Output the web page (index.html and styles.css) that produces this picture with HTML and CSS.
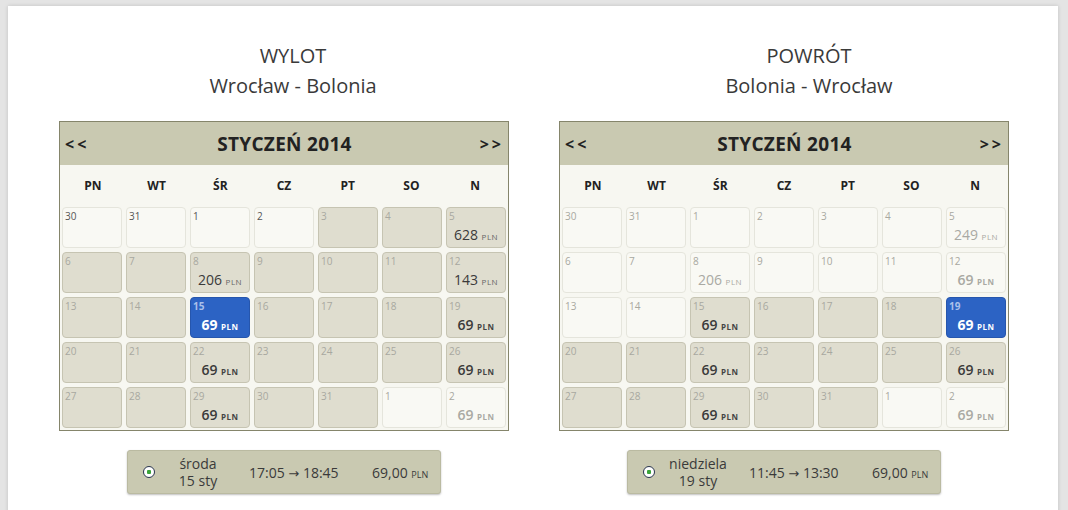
FILE: index.html
```html
<!DOCTYPE html>
<html lang="pl">
<head>
    <meta charset="UTF-8">
    <title>Wybór lotu</title>
    <link rel="stylesheet" href="styles.css">
</head>
<body>
    <div class="page">
        <div class="legs">
            <div class="leg">
                <h2 class="leg-title leg-title-out">WYLOT<br>Wrocław - Bolonia</h2>
                <div class="calendar">
                    <div class="cal-head">
                        <span class="nav">&lt;&lt;</span>
                        <span class="month">STYCZEŃ 2014</span>
                        <span class="nav">&gt;&gt;</span>
                    </div>
                    <div class="weekdays">
                        <span>PN</span><span>WT</span><span>ŚR</span><span>CZ</span><span>PT</span><span>SO</span><span>N</span>
                    </div>
                    <div class="days">
                        <div class="day off dark"><span class="num">30</span></div>
                        <div class="day off dark"><span class="num">31</span></div>
                        <div class="day off dark"><span class="num">1</span></div>
                        <div class="day off dark"><span class="num">2</span></div>
                        <div class="day"><span class="num">3</span></div>
                        <div class="day"><span class="num">4</span></div>
                        <div class="day"><span class="num">5</span><span class="price">628 <small>PLN</small></span></div>

                        <div class="day"><span class="num">6</span></div>
                        <div class="day"><span class="num">7</span></div>
                        <div class="day"><span class="num">8</span><span class="price">206 <small>PLN</small></span></div>
                        <div class="day"><span class="num">9</span></div>
                        <div class="day"><span class="num">10</span></div>
                        <div class="day"><span class="num">11</span></div>
                        <div class="day"><span class="num">12</span><span class="price">143 <small>PLN</small></span></div>

                        <div class="day"><span class="num">13</span></div>
                        <div class="day"><span class="num">14</span></div>
                        <div class="day selected"><span class="num">15</span><span class="price best">69 <small>PLN</small></span></div>
                        <div class="day"><span class="num">16</span></div>
                        <div class="day"><span class="num">17</span></div>
                        <div class="day"><span class="num">18</span></div>
                        <div class="day"><span class="num">19</span><span class="price best">69 <small>PLN</small></span></div>

                        <div class="day"><span class="num">20</span></div>
                        <div class="day"><span class="num">21</span></div>
                        <div class="day"><span class="num">22</span><span class="price best">69 <small>PLN</small></span></div>
                        <div class="day"><span class="num">23</span></div>
                        <div class="day"><span class="num">24</span></div>
                        <div class="day"><span class="num">25</span></div>
                        <div class="day"><span class="num">26</span><span class="price best">69 <small>PLN</small></span></div>

                        <div class="day"><span class="num">27</span></div>
                        <div class="day"><span class="num">28</span></div>
                        <div class="day"><span class="num">29</span><span class="price best">69 <small>PLN</small></span></div>
                        <div class="day"><span class="num">30</span></div>
                        <div class="day"><span class="num">31</span></div>
                        <div class="day off"><span class="num">1</span></div>
                        <div class="day off"><span class="num">2</span><span class="price best">69 <small>PLN</small></span></div>
                    </div>
                </div>
                <div class="flight">
                    <span class="radio"></span>
                    <span class="flight-date">środa<br>15 sty</span>
                    <span class="flight-time">17:05 <span class="arrow">&rarr;</span> 18:45</span>
                    <span class="flight-price">69,00 <small>PLN</small></span>
                </div>
            </div>

            <div class="leg">
                <h2 class="leg-title leg-title-back">POWRÓT<br>Bolonia - Wrocław</h2>
                <div class="calendar">
                    <div class="cal-head">
                        <span class="nav">&lt;&lt;</span>
                        <span class="month">STYCZEŃ 2014</span>
                        <span class="nav">&gt;&gt;</span>
                    </div>
                    <div class="weekdays">
                        <span>PN</span><span>WT</span><span>ŚR</span><span>CZ</span><span>PT</span><span>SO</span><span>N</span>
                    </div>
                    <div class="days">
                        <div class="day off"><span class="num">30</span></div>
                        <div class="day off"><span class="num">31</span></div>
                        <div class="day off"><span class="num">1</span></div>
                        <div class="day off"><span class="num">2</span></div>
                        <div class="day off"><span class="num">3</span></div>
                        <div class="day off"><span class="num">4</span></div>
                        <div class="day off"><span class="num">5</span><span class="price">249 <small>PLN</small></span></div>

                        <div class="day off"><span class="num">6</span></div>
                        <div class="day off"><span class="num">7</span></div>
                        <div class="day off"><span class="num">8</span><span class="price">206 <small>PLN</small></span></div>
                        <div class="day off"><span class="num">9</span></div>
                        <div class="day off"><span class="num">10</span></div>
                        <div class="day off"><span class="num">11</span></div>
                        <div class="day off"><span class="num">12</span><span class="price best">69 <small>PLN</small></span></div>

                        <div class="day off"><span class="num">13</span></div>
                        <div class="day off"><span class="num">14</span></div>
                        <div class="day"><span class="num">15</span><span class="price best">69 <small>PLN</small></span></div>
                        <div class="day"><span class="num">16</span></div>
                        <div class="day"><span class="num">17</span></div>
                        <div class="day"><span class="num">18</span></div>
                        <div class="day selected"><span class="num">19</span><span class="price best">69 <small>PLN</small></span></div>

                        <div class="day"><span class="num">20</span></div>
                        <div class="day"><span class="num">21</span></div>
                        <div class="day"><span class="num">22</span><span class="price best">69 <small>PLN</small></span></div>
                        <div class="day"><span class="num">23</span></div>
                        <div class="day"><span class="num">24</span></div>
                        <div class="day"><span class="num">25</span></div>
                        <div class="day"><span class="num">26</span><span class="price best">69 <small>PLN</small></span></div>

                        <div class="day"><span class="num">27</span></div>
                        <div class="day"><span class="num">28</span></div>
                        <div class="day"><span class="num">29</span><span class="price best">69 <small>PLN</small></span></div>
                        <div class="day"><span class="num">30</span></div>
                        <div class="day"><span class="num">31</span></div>
                        <div class="day off"><span class="num">1</span></div>
                        <div class="day off"><span class="num">2</span><span class="price best">69 <small>PLN</small></span></div>
                    </div>
                </div>
                <div class="flight">
                    <span class="radio"></span>
                    <span class="flight-date">niedziela<br>19 sty</span>
                    <span class="flight-time">11:45 <span class="arrow">&rarr;</span> 13:30</span>
                    <span class="flight-price">69,00 <small>PLN</small></span>
                </div>
            </div>
        </div>
    </div>
</body>
</html>
```

FILE: styles.css
```css
* {
    box-sizing: border-box;
    margin: 0;
    padding: 0;
}

body {
    background-color: #e4e4e4;
    font-family: 'Open Sans', Arial, sans-serif;
    color: #333;
    overflow: hidden;
}

.page {
    background-color: #fff;
    margin: 6px 10px 0 8px;
    height: 520px;
    box-shadow: 0 0 4px rgba(0, 0, 0, 0.15);
    padding-top: 35px;
}

.legs {
    display: flex;
    gap: 50px;
    padding-left: 51px;
}

.leg {
    width: 450px;
}

.leg-title {
    font-size: 20px;
    font-weight: normal;
    line-height: 30px;
    text-align: center;
    color: #3a3a3a;
    margin-bottom: 20px;
}

.leg-title-out {
    padding-left: 18px;
}

.leg-title-back {
    padding-left: 50px;
}

.calendar {
    border: 1px solid #85856b;
    background-color: #f7f7f1;
}

.cal-head {
    display: flex;
    justify-content: space-between;
    align-items: center;
    height: 43px;
    padding: 0 4px 0 5px;
    background-color: #c9c9b1;
    font-weight: bold;
    color: #222;
}

.nav {
    font-size: 16px;
    letter-spacing: 3px;
}

.month {
    font-size: 19px;
    letter-spacing: 0.3px;
}

.weekdays {
    display: grid;
    grid-template-columns: repeat(7, 1fr);
    height: 40px;
    align-items: center;
    padding: 0 1px;
    font-size: 12px;
    font-weight: bold;
    color: #222;
    text-align: center;
}

.days {
    display: grid;
    grid-template-columns: repeat(7, 60px);
    grid-auto-rows: 41px;
    gap: 4px;
    padding: 2px;
}

.day {
    position: relative;
    background-color: #dfddcf;
    border: 1px solid #c6c4b2;
    border-radius: 4px;
    text-align: center;
}

.day.off {
    background-color: #f9f9f4;
    border-color: #e5e5dc;
}

.num {
    position: absolute;
    left: 2px;
    top: 1px;
    font-size: 10px;
    color: #a8a8a0;
}

.day.dark .num {
    color: #555;
}

.price {
    position: absolute;
    left: 0;
    right: 0;
    bottom: 3px;
    font-size: 14px;
    color: #3a3a3a;
}

.price small {
    font-size: 8px;
    letter-spacing: 0.5px;
    color: #666;
}

.price.best {
    font-weight: 600;
}

.price.best small {
    font-weight: bold;
    color: #444;
}

.day.off .price,
.day.off .price small {
    color: #a9a9a3;
}

.day.selected {
    background-color: #2c63c4;
    border-color: #2656ad;
}

.day.selected .num {
    color: #a9c0ea;
    font-weight: bold;
}

.day.selected .price,
.day.selected .price small {
    color: #fff;
    font-weight: bold;
}

.flight {
    display: flex;
    align-items: center;
    width: 314px;
    height: 44px;
    margin: 19px auto 0;
    padding-left: 15px;
    background-color: #c9c9b1;
    border: 1px solid #babaa1;
    border-radius: 3px;
    box-shadow: 0 1px 2px rgba(0, 0, 0, 0.25);
    font-size: 14px;
    color: #3a3a3a;
}

.radio {
    width: 12px;
    height: 12px;
    border: 1px solid #2a3550;
    border-radius: 50%;
    background: radial-gradient(circle, #3aa33a 0, #3aa33a 2px, #fff 2.5px);
}

.flight-date {
    width: 84px;
    margin-left: 1px;
    line-height: 17px;
    text-align: center;
}

.flight-time {
    margin-left: 9px;
    width: 123px;
}

.arrow {
    font-family: 'DejaVu Sans', sans-serif;
    font-size: 13px;
}

.flight-price small {
    font-size: 9px;
}
```
